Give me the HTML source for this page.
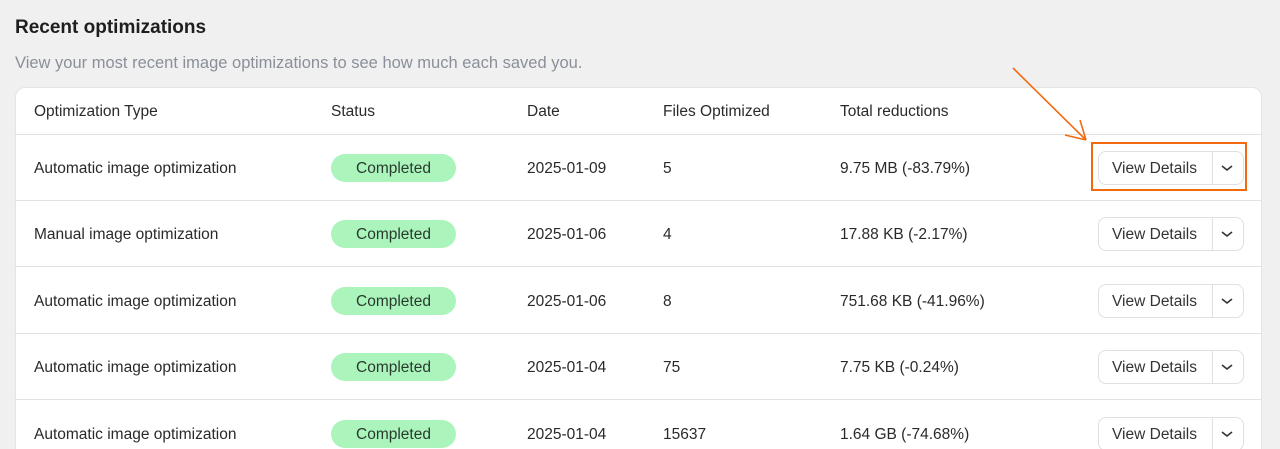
<!DOCTYPE html><html><head><style>
html,body{margin:0;width:1280px;height:449px;overflow:hidden}
body{background:#f0f0f0;font-family:"Liberation Sans",sans-serif;position:relative;color:#2a2a2a}
.h{position:absolute;left:15px;top:17px;font-size:19px;font-weight:bold;color:#1e1e1e}
.s{position:absolute;left:15px;top:54px;font-size:16.5px;color:#8a8f99}
.card{position:absolute;left:15px;top:87px;width:1247px;height:380px;background:#fff;border-radius:10px;border:1px solid #e4e4e4;box-sizing:border-box}
.t{position:absolute;font-size:15.5px;transform:translateY(-50%);white-space:nowrap;margin-top:1px}
.line{position:absolute;left:15px;width:1247px;height:1px;background:#e2e2e2}
.b{position:absolute;left:331px;width:125px;height:28px;background:#abf5bd;border-radius:14px;font-size:15.5px;text-align:center;line-height:29px;transform:translateY(-50%);color:#2a3a2e}
.btn{position:absolute;left:1098px;width:146px;height:34px;border:1px solid #e0e0e0;border-radius:8px;box-sizing:border-box;transform:translateY(-50%);background:#fff}
.btn span{position:absolute;left:13px;top:8px;font-size:15.5px;color:#333}
.btn i{position:absolute;left:113px;top:0;width:1px;height:32px;background:#e0e0e0}
.btn svg{position:absolute;left:122px;top:11px}
</style></head><body>
<div class="h">Recent optimizations</div>
<div class="s">View your most recent image optimizations to see how much each saved you.</div>
<div class="card"></div>
<div class="t" style="left:34px;top:111px">Optimization Type</div>
<div class="t" style="left:331px;top:111px">Status</div>
<div class="t" style="left:527px;top:111px">Date</div>
<div class="t" style="left:663px;top:111px">Files Optimized</div>
<div class="t" style="left:840px;top:111px">Total reductions</div>
<div class="line" style="top:134px"></div>
<div class="line" style="top:200px"></div>
<div class="line" style="top:266px"></div>
<div class="line" style="top:333px"></div>
<div class="line" style="top:399px"></div>

<div class="t" style="left:34px;top:168px">Automatic image optimization</div><div class="b" style="top:168px">Completed</div><div class="t" style="left:527px;top:168px">2025-01-09</div><div class="t" style="left:663px;top:168px">5</div><div class="t" style="left:840px;top:168px">9.75 MB (-83.79%)</div>
<div class="btn" style="top:168px"><span>View Details</span><i></i><svg width="12" height="10"><path d="M1 3l5 4 5-4" stroke="#333" stroke-width="1.6" fill="none"/></svg></div>

<div class="t" style="left:34px;top:234px">Manual image optimization</div><div class="b" style="top:234px">Completed</div><div class="t" style="left:527px;top:234px">2025-01-06</div><div class="t" style="left:663px;top:234px">4</div><div class="t" style="left:840px;top:234px">17.88 KB (-2.17%)</div>
<div class="btn" style="top:234px"><span>View Details</span><i></i><svg width="12" height="10"><path d="M1 3l5 4 5-4" stroke="#333" stroke-width="1.6" fill="none"/></svg></div>

<div class="t" style="left:34px;top:301px">Automatic image optimization</div><div class="b" style="top:301px">Completed</div><div class="t" style="left:527px;top:301px">2025-01-06</div><div class="t" style="left:663px;top:301px">8</div><div class="t" style="left:840px;top:301px">751.68 KB (-41.96%)</div>
<div class="btn" style="top:301px"><span>View Details</span><i></i><svg width="12" height="10"><path d="M1 3l5 4 5-4" stroke="#333" stroke-width="1.6" fill="none"/></svg></div>

<div class="t" style="left:34px;top:367px">Automatic image optimization</div><div class="b" style="top:367px">Completed</div><div class="t" style="left:527px;top:367px">2025-01-04</div><div class="t" style="left:663px;top:367px">75</div><div class="t" style="left:840px;top:367px">7.75 KB (-0.24%)</div>
<div class="btn" style="top:367px"><span>View Details</span><i></i><svg width="12" height="10"><path d="M1 3l5 4 5-4" stroke="#333" stroke-width="1.6" fill="none"/></svg></div>

<div class="t" style="left:34px;top:434px">Automatic image optimization</div><div class="b" style="top:434px">Completed</div><div class="t" style="left:527px;top:434px">2025-01-04</div><div class="t" style="left:663px;top:434px">15637</div><div class="t" style="left:840px;top:434px">1.64 GB (-74.68%)</div>
<div class="btn" style="top:434px"><span>View Details</span><i></i><svg width="12" height="10"><path d="M1 3l5 4 5-4" stroke="#333" stroke-width="1.6" fill="none"/></svg></div>

<div style="position:absolute;left:1091px;top:142px;width:156px;height:49px;border:2px solid #f26a0f;box-sizing:border-box"></div>
<svg style="position:absolute;left:0;top:0" width="1280" height="449"><path d="M1013 68L1086 140M1086 140L1065 135M1086 140L1080 120" stroke="#f26a0f" stroke-width="1.6" fill="none"/></svg>
</body></html>
